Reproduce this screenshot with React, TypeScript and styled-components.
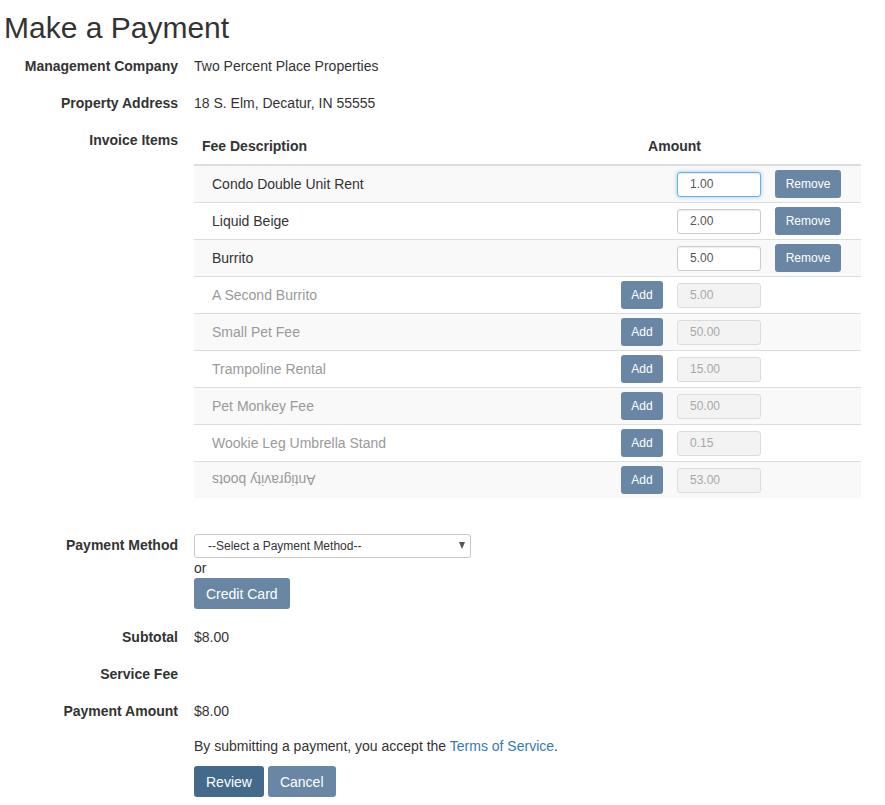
import React from "react";
import styled, { createGlobalStyle, css } from "styled-components";

const GlobalStyle = createGlobalStyle`
  html, body {
    margin: 0;
    padding: 0;
    background: #ffffff;
  }
  body {
    font-family: "Liberation Sans", Arial, Helvetica, sans-serif;
    font-size: 14px;
    line-height: 20px;
    color: #333333;
  }
  * { box-sizing: border-box; }
`;

const Page = styled.div`
  width: 861px;
  padding-bottom: 8px;
`;

const Title = styled.h1`
  margin: 11px 0 10px 4px;
  font-size: 30px;
  line-height: 33px;
  font-weight: 400;
  color: #333333;
`;

const Row = styled.div<{ $mb?: number }>`
  display: grid;
  grid-template-columns: 178px 1fr;
  column-gap: 16px;
  align-items: start;
  margin-bottom: ${(p) => (p.$mb ?? 15)}px;
`;

const Label = styled.div<{ $empty?: boolean }>`
  text-align: right;
  font-weight: 700;
  padding-top: ${(p) => (p.$empty ? 0 : 2)}px;
  line-height: 20px;
  min-height: ${(p) => (p.$empty ? 0 : 22)}px;
`;

const Value = styled.div<{ $pad?: number }>`
  padding-top: ${(p) => (p.$pad ?? 2)}px;
  line-height: 20px;
`;

const Table = styled.div`
  display: flex;
  flex-direction: column;
`;

const HeadRow = styled.div`
  display: flex;
  justify-content: space-between;
  padding: 8px 160px 8px 8px;
  border-bottom: 2px solid #dddddd;
  font-weight: 700;
  line-height: 20px;
`;

const ItemRow = styled.div<{ $striped: boolean; $first: boolean }>`
  display: grid;
  grid-template-columns: 1fr 42px 84px 66px;
  column-gap: 14px;
  align-items: center;
  height: ${(p) => (p.$first ? 36 : 37)}px;
  padding: 0 20px 0 18px;
  border-top: ${(p) => (p.$first ? "none" : "1px solid #dddddd")};
  background: ${(p) => (p.$striped ? "#f9f9f9" : "#ffffff")};
`;

const Desc = styled.div<{ $muted: boolean; $flipped?: boolean }>`
  color: ${(p) => (p.$muted ? "#9a9a9a" : "#333333")};
  line-height: 20px;
  ${(p) =>
    p.$flipped &&
    css`
      & > span {
        display: inline-block;
        transform: rotate(180deg);
      }
    `}
`;

const Btn = styled.button<{ $size?: "sm" | "md"; $tone?: "primary" | "plain" }>`
  border: none;
  border-radius: 3px;
  color: #ffffff;
  font-family: "Liberation Sans", Arial, sans-serif;
  cursor: pointer;
  background: ${(p) => (p.$tone === "primary" ? "#436a8b" : "#6987a4")};
  ${(p) =>
    p.$size === "sm"
      ? css`
          height: 28px;
          font-size: 12px;
          line-height: 16px;
          padding: 0;
          width: 100%;
        `
      : css`
          height: 31px;
          font-size: 14px;
          line-height: 20px;
          padding: 0 12px;
        `}
`;

const AmountInput = styled.input<{ $focus?: boolean }>`
  width: 84px;
  height: 25px;
  padding: 0 0 0 12px;
  font-family: "Liberation Sans", Arial, sans-serif;
  font-size: 12px;
  color: #555555;
  border: 1px solid #cccccc;
  border-radius: 3px;
  background: #ffffff;
  box-shadow: inset 0 1px 1px rgba(0, 0, 0, 0.075);
  outline: none;
  &:disabled {
    background: #f3f3f3;
    border-color: #dcdcdc;
    color: #a8a8a8;
    box-shadow: none;
  }
  ${(p) =>
    p.$focus &&
    css`
      border-color: #66afe9;
      box-shadow: inset 0 1px 1px rgba(0, 0, 0, 0.075), 0 0 4px rgba(102, 175, 233, 0.6);
    `}
`;

const SelectWrap = styled.div`
  position: relative;
  width: 277px;
  height: 24px;
  margin-top: -1px;
`;

const Select = styled.select`
  appearance: none;
  -webkit-appearance: none;
  width: 100%;
  height: 24px;
  padding: 0 0 0 13px;
  font-family: "Liberation Sans", Arial, sans-serif;
  font-size: 12px;
  color: #333333;
  background: #ffffff;
  border: 1px solid #c8c8c8;
  border-radius: 3px;
  outline: none;
`;

const Caret = styled.span`
  position: absolute;
  right: 6px;
  top: 8px;
  width: 0;
  height: 0;
  border-left: 3.5px solid transparent;
  border-right: 3.5px solid transparent;
  border-top: 7px solid #555555;
  pointer-events: none;
`;

const OrText = styled.div`
  line-height: 20px;
`;

const Link = styled.a`
  color: #337ab7;
  text-decoration: none;
`;

const ButtonBar = styled.div`
  display: flex;
  gap: 4px;
  margin-top: 10px;
`;

type Item = { desc: string; amount: string; added: boolean; flipped?: boolean };

const items: Item[] = [
  { desc: "Condo Double Unit Rent", amount: "1.00", added: true },
  { desc: "Liquid Beige", amount: "2.00", added: true },
  { desc: "Burrito", amount: "5.00", added: true },
  { desc: "A Second Burrito", amount: "5.00", added: false },
  { desc: "Small Pet Fee", amount: "50.00", added: false },
  { desc: "Trampoline Rental", amount: "15.00", added: false },
  { desc: "Pet Monkey Fee", amount: "50.00", added: false },
  { desc: "Wookie Leg Umbrella Stand", amount: "0.15", added: false },
  { desc: "Antigravity boots", amount: "53.00", added: false, flipped: true },
];

export default function App() {
  return (
    <>
      <GlobalStyle />
      <Page>
        <Title>Make a Payment</Title>

        <Row>
          <Label>Management Company</Label>
          <Value>Two Percent Place Properties</Value>
        </Row>
        <Row>
          <Label>Property Address</Label>
          <Value>18 S. Elm, Decatur, IN 55555</Value>
        </Row>
        <Row $mb={35}>
          <Label>Invoice Items</Label>
          <Value $pad={0}>
            <Table>
              <HeadRow>
                <span>Fee Description</span>
                <span>Amount</span>
              </HeadRow>
              {items.map((it, i) => (
                <ItemRow key={it.desc} $striped={i % 2 === 0} $first={i === 0}>
                  <Desc $muted={!it.added} $flipped={it.flipped}>
                    <span>{it.desc}</span>
                  </Desc>
                  <div>{!it.added && <Btn $size="sm">Add</Btn>}</div>
                  <AmountInput
                    defaultValue={it.amount}
                    disabled={!it.added}
                    $focus={i === 0}
                  />
                  <div>{it.added && <Btn $size="sm">Remove</Btn>}</div>
                </ItemRow>
              ))}
            </Table>
          </Value>
        </Row>

        <Row $mb={16}>
          <Label>Payment Method</Label>
          <Value>
            <SelectWrap>
              <Select defaultValue="">
                <option value="">--Select a Payment Method--</option>
              </Select>
              <Caret />
            </SelectWrap>
            <OrText>or</OrText>
            <Btn>Credit Card</Btn>
          </Value>
        </Row>

        <Row>
          <Label>Subtotal</Label>
          <Value>$8.00</Value>
        </Row>
        <Row>
          <Label>Service Fee</Label>
          <Value></Value>
        </Row>
        <Row>
          <Label>Payment Amount</Label>
          <Value>$8.00</Value>
        </Row>
        <Row $mb={0}>
          <Label $empty />
          <Value $pad={0}>
            By submitting a payment, you accept the <Link href="#">Terms of Service</Link>.
            <ButtonBar>
              <Btn $tone="primary">Review</Btn>
              <Btn>Cancel</Btn>
            </ButtonBar>
          </Value>
        </Row>
      </Page>
    </>
  );
}
